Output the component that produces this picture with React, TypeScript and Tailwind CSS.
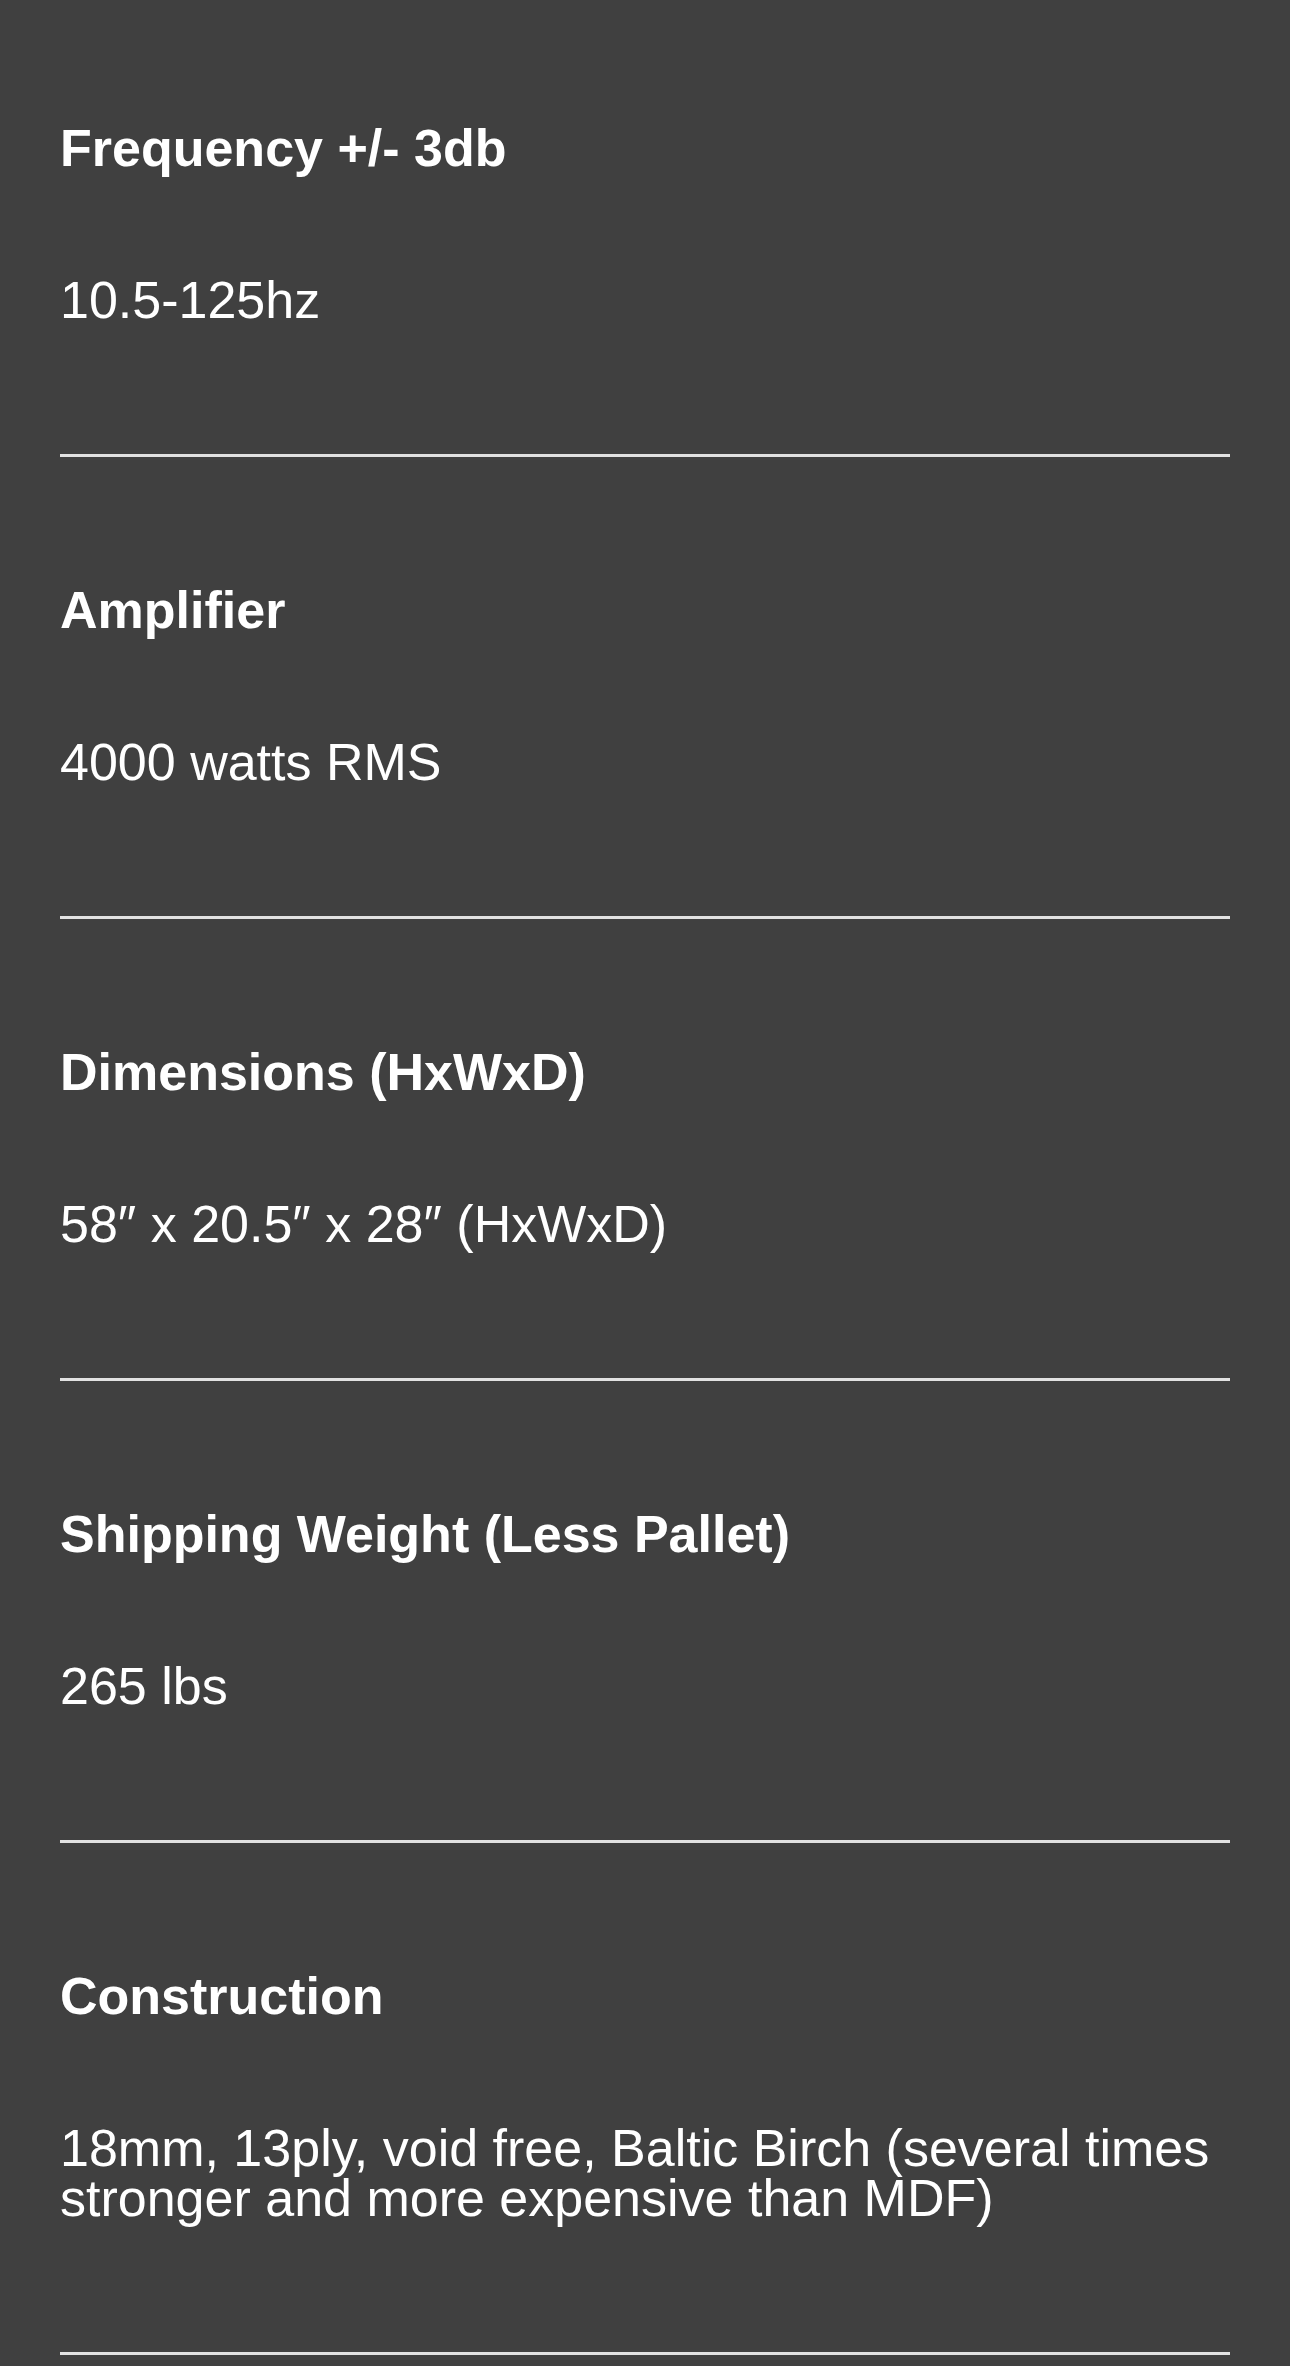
import React from 'react';

interface Spec {
  label: string;
  value: string;
}

const specs: Spec[] = [
  { label: 'Frequency +/- 3db', value: '10.5-125hz' },
  { label: 'Amplifier', value: '4000 watts RMS' },
  { label: 'Dimensions (HxWxD)', value: '58\u2033 x 20.5\u2033 x 28\u2033 (HxWxD)' },
  { label: 'Shipping Weight (Less Pallet)', value: '265 lbs' },
  {
    label: 'Construction',
    value: '18mm, 13ply, void free, Baltic Birch (several times stronger and more expensive than MDF)',
  },
];

const SpecRow: React.FC<{ spec: Spec; first: boolean }> = ({ spec, first }) => (
  <div className={`${first ? 'pt-[123px]' : 'pt-[128px]'} pb-[129px] border-b-[3px] border-[#e2e2e2]`}>
    <h4 className="text-[52px] leading-[50px] font-bold text-white">{spec.label}</h4>
    <p className="mt-[102px] text-[52px] leading-[50px] text-white">{spec.value}</p>
  </div>
);

const App: React.FC = () => {
  return (
    <div
      className="min-h-screen bg-[#404040] px-[60px] pb-[9px]"
      style={{ fontFamily: '"Liberation Sans", Arial, sans-serif' }}
    >
      {specs.map((spec, i) => (
        <SpecRow key={spec.label} spec={spec} first={i === 0} />
      ))}
    </div>
  );
};

export default App;
